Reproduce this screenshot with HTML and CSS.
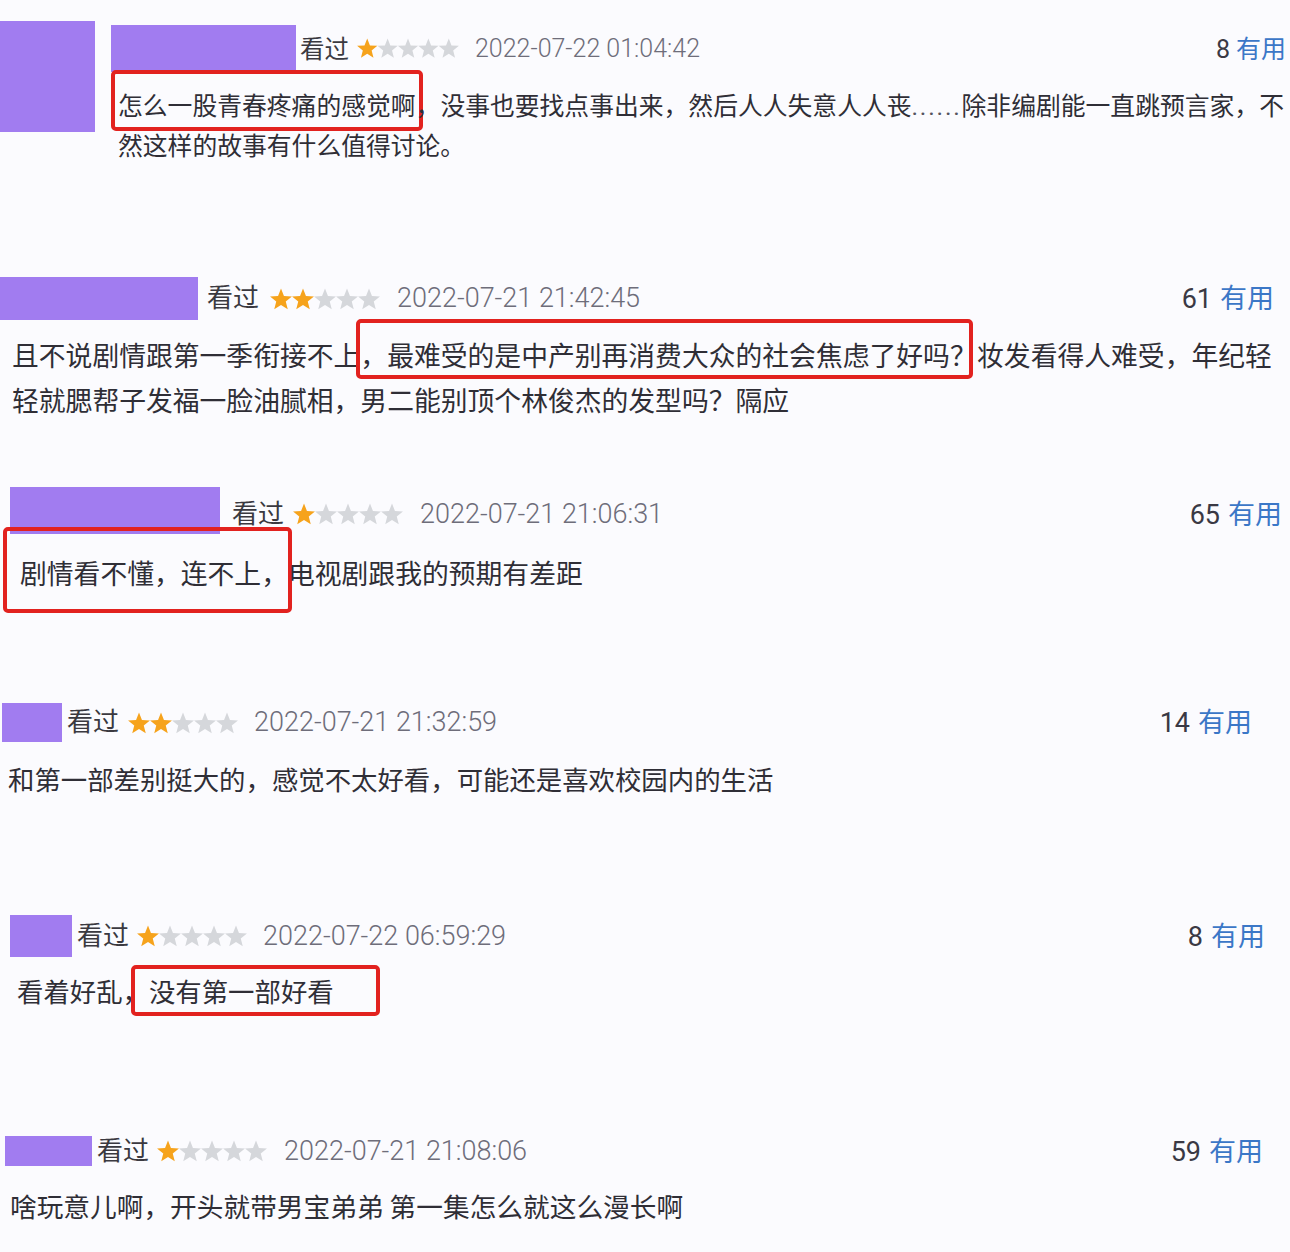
FILE: index.html
```html
<!DOCTYPE html>
<html lang="zh-CN">
<head>
<meta charset="utf-8">
<title>短评</title>
<link rel="stylesheet" href="styles.css">
</head>
<body>
<div class="page">

  <div class="review r1">
    <div class="blk av1"></div>
    <div class="col">
      <div class="head">
        <div class="blk nm1"></div>
        <span class="seen">看过</span>
        <svg class="stars" viewBox="0 0 110 22"><polygon class="on" points="11,0.5 13.94,7.96 21.94,8.45 15.76,13.55 17.76,21.3 11,17 4.24,21.3 6.24,13.55 0.06,8.45 8.06,7.96"/><polygon class="off" transform="translate(22 0)" points="11,0.5 13.94,7.96 21.94,8.45 15.76,13.55 17.76,21.3 11,17 4.24,21.3 6.24,13.55 0.06,8.45 8.06,7.96"/><polygon class="off" transform="translate(44 0)" points="11,0.5 13.94,7.96 21.94,8.45 15.76,13.55 17.76,21.3 11,17 4.24,21.3 6.24,13.55 0.06,8.45 8.06,7.96"/><polygon class="off" transform="translate(66 0)" points="11,0.5 13.94,7.96 21.94,8.45 15.76,13.55 17.76,21.3 11,17 4.24,21.3 6.24,13.55 0.06,8.45 8.06,7.96"/><polygon class="off" transform="translate(88 0)" points="11,0.5 13.94,7.96 21.94,8.45 15.76,13.55 17.76,21.3 11,17 4.24,21.3 6.24,13.55 0.06,8.45 8.06,7.96"/></svg>
        <span class="date">2022-07-22 01:04:42</span>
        <span class="useful"><span class="n">8</span><span class="u">有用</span></span>
      </div>
      <p class="text"><span class="mark m1">怎么一股青春疼痛的感觉啊</span>，没事也要找点事出来，然后人人失意人人丧<span class="dots">......</span>除非编剧能一直跳预言家，不然这样的故事有什么值得讨论。</p>
    </div>
  </div>

  <div class="review r2">
    <div class="head">
      <div class="blk nm2"></div>
      <span class="seen">看过</span>
      <svg class="stars" viewBox="0 0 110 22"><polygon class="on" points="11,0.5 13.94,7.96 21.94,8.45 15.76,13.55 17.76,21.3 11,17 4.24,21.3 6.24,13.55 0.06,8.45 8.06,7.96"/><polygon class="on" transform="translate(22 0)" points="11,0.5 13.94,7.96 21.94,8.45 15.76,13.55 17.76,21.3 11,17 4.24,21.3 6.24,13.55 0.06,8.45 8.06,7.96"/><polygon class="off" transform="translate(44 0)" points="11,0.5 13.94,7.96 21.94,8.45 15.76,13.55 17.76,21.3 11,17 4.24,21.3 6.24,13.55 0.06,8.45 8.06,7.96"/><polygon class="off" transform="translate(66 0)" points="11,0.5 13.94,7.96 21.94,8.45 15.76,13.55 17.76,21.3 11,17 4.24,21.3 6.24,13.55 0.06,8.45 8.06,7.96"/><polygon class="off" transform="translate(88 0)" points="11,0.5 13.94,7.96 21.94,8.45 15.76,13.55 17.76,21.3 11,17 4.24,21.3 6.24,13.55 0.06,8.45 8.06,7.96"/></svg>
      <span class="date">2022-07-21 21:42:45</span>
      <span class="useful"><span class="n">61</span><span class="u">有用</span></span>
    </div>
    <p class="text">且不说剧情跟第一季衔接不上<span class="mark m2">，最难受的是中产别再消费大众的社会焦虑了好吗<span class="q">？</span></span>妆发看得人难受，年纪轻轻就腮帮子发福一脸油腻相，男二能别顶个林俊杰的发型吗？隔应</p>
  </div>

  <div class="review r3">
    <div class="head">
      <div class="blk nm3"></div>
      <span class="seen">看过</span>
      <svg class="stars" viewBox="0 0 110 22"><polygon class="on" points="11,0.5 13.94,7.96 21.94,8.45 15.76,13.55 17.76,21.3 11,17 4.24,21.3 6.24,13.55 0.06,8.45 8.06,7.96"/><polygon class="off" transform="translate(22 0)" points="11,0.5 13.94,7.96 21.94,8.45 15.76,13.55 17.76,21.3 11,17 4.24,21.3 6.24,13.55 0.06,8.45 8.06,7.96"/><polygon class="off" transform="translate(44 0)" points="11,0.5 13.94,7.96 21.94,8.45 15.76,13.55 17.76,21.3 11,17 4.24,21.3 6.24,13.55 0.06,8.45 8.06,7.96"/><polygon class="off" transform="translate(66 0)" points="11,0.5 13.94,7.96 21.94,8.45 15.76,13.55 17.76,21.3 11,17 4.24,21.3 6.24,13.55 0.06,8.45 8.06,7.96"/><polygon class="off" transform="translate(88 0)" points="11,0.5 13.94,7.96 21.94,8.45 15.76,13.55 17.76,21.3 11,17 4.24,21.3 6.24,13.55 0.06,8.45 8.06,7.96"/></svg>
      <span class="date">2022-07-21 21:06:31</span>
      <span class="useful"><span class="n">65</span><span class="u">有用</span></span>
    </div>
    <p class="text"><span class="mark m3">剧情看不懂，连不上，</span>电视剧跟我的预期有差距</p>
  </div>

  <div class="review r4">
    <div class="head">
      <div class="blk nm4"></div>
      <span class="seen">看过</span>
      <svg class="stars" viewBox="0 0 110 22"><polygon class="on" points="11,0.5 13.94,7.96 21.94,8.45 15.76,13.55 17.76,21.3 11,17 4.24,21.3 6.24,13.55 0.06,8.45 8.06,7.96"/><polygon class="on" transform="translate(22 0)" points="11,0.5 13.94,7.96 21.94,8.45 15.76,13.55 17.76,21.3 11,17 4.24,21.3 6.24,13.55 0.06,8.45 8.06,7.96"/><polygon class="off" transform="translate(44 0)" points="11,0.5 13.94,7.96 21.94,8.45 15.76,13.55 17.76,21.3 11,17 4.24,21.3 6.24,13.55 0.06,8.45 8.06,7.96"/><polygon class="off" transform="translate(66 0)" points="11,0.5 13.94,7.96 21.94,8.45 15.76,13.55 17.76,21.3 11,17 4.24,21.3 6.24,13.55 0.06,8.45 8.06,7.96"/><polygon class="off" transform="translate(88 0)" points="11,0.5 13.94,7.96 21.94,8.45 15.76,13.55 17.76,21.3 11,17 4.24,21.3 6.24,13.55 0.06,8.45 8.06,7.96"/></svg>
      <span class="date">2022-07-21 21:32:59</span>
      <span class="useful"><span class="n">14</span><span class="u">有用</span></span>
    </div>
    <p class="text">和第一部差别挺大的，感觉不太好看，可能还是喜欢校园内的生活</p>
  </div>

  <div class="review r5">
    <div class="head">
      <div class="blk nm5"></div>
      <span class="seen">看过</span>
      <svg class="stars" viewBox="0 0 110 22"><polygon class="on" points="11,0.5 13.94,7.96 21.94,8.45 15.76,13.55 17.76,21.3 11,17 4.24,21.3 6.24,13.55 0.06,8.45 8.06,7.96"/><polygon class="off" transform="translate(22 0)" points="11,0.5 13.94,7.96 21.94,8.45 15.76,13.55 17.76,21.3 11,17 4.24,21.3 6.24,13.55 0.06,8.45 8.06,7.96"/><polygon class="off" transform="translate(44 0)" points="11,0.5 13.94,7.96 21.94,8.45 15.76,13.55 17.76,21.3 11,17 4.24,21.3 6.24,13.55 0.06,8.45 8.06,7.96"/><polygon class="off" transform="translate(66 0)" points="11,0.5 13.94,7.96 21.94,8.45 15.76,13.55 17.76,21.3 11,17 4.24,21.3 6.24,13.55 0.06,8.45 8.06,7.96"/><polygon class="off" transform="translate(88 0)" points="11,0.5 13.94,7.96 21.94,8.45 15.76,13.55 17.76,21.3 11,17 4.24,21.3 6.24,13.55 0.06,8.45 8.06,7.96"/></svg>
      <span class="date">2022-07-22 06:59:29</span>
      <span class="useful"><span class="n">8</span><span class="u">有用</span></span>
    </div>
    <p class="text">看着好乱，<span class="mark m5">没有第一部好看</span></p>
  </div>

  <div class="review r6">
    <div class="head">
      <div class="blk nm6"></div>
      <span class="seen">看过</span>
      <svg class="stars" viewBox="0 0 110 22"><polygon class="on" points="11,0.5 13.94,7.96 21.94,8.45 15.76,13.55 17.76,21.3 11,17 4.24,21.3 6.24,13.55 0.06,8.45 8.06,7.96"/><polygon class="off" transform="translate(22 0)" points="11,0.5 13.94,7.96 21.94,8.45 15.76,13.55 17.76,21.3 11,17 4.24,21.3 6.24,13.55 0.06,8.45 8.06,7.96"/><polygon class="off" transform="translate(44 0)" points="11,0.5 13.94,7.96 21.94,8.45 15.76,13.55 17.76,21.3 11,17 4.24,21.3 6.24,13.55 0.06,8.45 8.06,7.96"/><polygon class="off" transform="translate(66 0)" points="11,0.5 13.94,7.96 21.94,8.45 15.76,13.55 17.76,21.3 11,17 4.24,21.3 6.24,13.55 0.06,8.45 8.06,7.96"/><polygon class="off" transform="translate(88 0)" points="11,0.5 13.94,7.96 21.94,8.45 15.76,13.55 17.76,21.3 11,17 4.24,21.3 6.24,13.55 0.06,8.45 8.06,7.96"/></svg>
      <span class="date">2022-07-21 21:08:06</span>
      <span class="useful"><span class="n">59</span><span class="u">有用</span></span>
    </div>
    <p class="text">啥玩意儿啊，开头就带男宝弟弟 第一集怎么就这么漫长啊</p>
  </div>

</div>
</body>
</html>
```

FILE: styles.css
```css
html, body {
  margin: 0;
  padding: 0;
}
body {
  background: #fbfbfe;
  font-family: "Noto Sans CJK SC", "Noto Sans", sans-serif;
  color: #33323a;
  width: 1290px;
  height: 1252px;
  overflow: hidden;
}
.page {
  width: 1290px;
}

/* generic parts */
.blk {
  background: #a17cf0;
  flex: none;
}
.head {
  display: flex;
  align-items: center;
}
.seen {
  font-size: 26px;
  line-height: 1.2;
  color: #3a3940;
  flex: none;
  margin-top: -5px;
}
.stars {
  flex: none;
  display: block;
  width: 110px;
  height: 22px;
}
.stars .on { fill: #f6a31c; }
.stars .off { fill: #d5d7db; }
.date {
  font-family: Roboto, "Liberation Sans", sans-serif;
  font-weight: 300;
  font-size: 27px;
  line-height: 1.2;
  color: #6e6d7a;
  flex: none;
}
.useful {
  margin-left: auto;
  display: flex;
  align-items: baseline;
  gap: 8px;
  font-size: 27px;
  line-height: 1.2;
}
.useful .n {
  font-family: Roboto, "Liberation Sans", sans-serif;
  color: #3a3944;
}
.useful .u {
  color: #3b77c7;
}
.text {
  margin: 0;
  font-size: 26.8px;
  line-height: 45px;
  color: #2f2e36;
}
.mark {
  border: 4px solid #e2221f;
  border-radius: 5px;
}

/* review 1: large avatar + column */
.r1 {
  display: flex;
  padding-top: 21px;
}
.av1 {
  width: 95px;
  height: 111px;
}
.r1 .col {
  flex: 1;
  margin-left: 16px;
  padding-right: 4px;
  min-width: 0;
}
.r1 .head {
  margin-top: 4px;
}
.nm1 {
  width: 185px;
  height: 47px;
}
.r1 .seen {
  font-size: 24.5px;
  margin-left: 4px;
  margin-top: -2px;
}
.r1 .stars {
  width: 102px;
  height: 20.4px;
  margin-left: 8px;
}
.r1 .date {
  font-size: 25px;
  margin-left: 16px;
}
.r1 .useful {
  font-size: 25px;
  gap: 6px;
}
.r1 .text {
  margin-top: 12px;
  padding-left: 7px;
  font-size: 24.8px;
  line-height: 40px;
}
.m1 {
  padding: 12px 3px 5px 3px;
  margin: 0 -7px;
}
.dots {
  font-family: Roboto, "Liberation Sans", sans-serif;
  letter-spacing: 1.8px;
  line-height: 1;
  color: #55545e;
}

/* review 2 */
.r2 {
  margin-top: 113px;
  padding-right: 10px;
}
.r2 .head {
  padding-right: 6px;
}
.nm2 {
  width: 198px;
  height: 43px;
}
.r2 .seen { margin-left: 9px; }
.r2 .stars { margin-left: 10px; width: 112px; }
.r2 .date { margin-left: 16px; }
.r2 .text {
  margin-top: 12px;
  padding-left: 12px;
}
.m2 {
  padding: 12px 0 1px 0;
  margin-left: -4px;
  margin-right: 4.4px;
}
.m2 .q {
  letter-spacing: -8px;
}

/* review 3 */
.r3 {
  margin-top: 65px;
}
.r3 .head {
  height: 54px;
  padding-left: 10px;
  padding-right: 8px;
}
.nm3 {
  width: 210px;
  height: 47px;
  align-self: flex-start;
}
.r3 .seen { margin-left: 12px; }
.r3 .stars { margin-left: 8px; width: 112px; }
.r3 .date { margin-left: 16px; }
.r3 .text {
  margin-top: 9px;
  padding-left: 20px;
}
.m3 {
  padding: 22px 0 17px 13px;
  margin-left: -17px;
  margin-right: -4px;
}

/* review 4 */
.r4 {
  margin-top: 108px;
}
.r4 .head {
  padding-left: 2px;
  padding-right: 38px;
}
.nm4 {
  width: 60px;
  height: 39px;
}
.r4 .seen { margin-left: 5px; }
.r4 .stars { margin-left: 9px; }
.r4 .date { margin-left: 16px; }
.r4 .text {
  margin-top: 13.5px;
  padding-left: 8px;
  font-size: 26.4px;
}

/* review 5 */
.r5 {
  margin-top: 114.5px;
}
.r5 .head {
  padding-left: 10px;
  padding-right: 25px;
}
.nm5 {
  width: 62px;
  height: 42px;
}
.r5 .seen { margin-left: 5px; }
.r5 .stars { margin-left: 8px; }
.r5 .date { margin-left: 16px; }
.r5 .text {
  margin-top: 10.5px;
  padding-left: 17px;
  font-size: 26.4px;
}
.m5 {
  padding: 2px 42px 2px 14px;
  margin-left: -18px;
}

/* review 6 */
.r6 {
  margin-top: 121.5px;
}
.r6 .head {
  padding-left: 5px;
  padding-right: 27px;
}
.nm6 {
  width: 87px;
  height: 30px;
}
.r6 .seen { margin-left: 5px; }
.r6 .stars { margin-left: 8px; }
.r6 .date { margin-left: 17px; }
.r6 .text {
  margin-top: 14.5px;
  padding-left: 10px;
  font-size: 26.7px;
}
```
